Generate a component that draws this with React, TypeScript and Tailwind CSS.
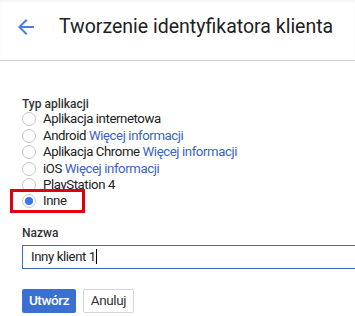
import React from 'react'

const options = [
  { label: 'Aplikacja internetowa', more: false },
  { label: 'Android', more: true },
  { label: 'Aplikacja Chrome', more: true },
  { label: 'iOS', more: true },
  { label: 'PlayStation 4', more: false },
]

const Radio = ({ checked }: { checked?: boolean }) => (
  <span className="w-[14px] h-[14px] rounded-full border border-[#c8c8c8] bg-white flex items-center justify-center shrink-0">
    {checked && <span className="w-[8px] h-[8px] rounded-full bg-[#3b78e7]" />}
  </span>
)

export default function App() {
  return (
    <div className="w-[355px] h-[316px] bg-white overflow-hidden text-[#212121]" style={{ fontFamily: 'Roboto, "Liberation Sans", sans-serif' }}>
      <div className="h-[61px] border-b border-[#d0d0d0] flex items-center shadow-[inset_0_2px_2px_rgba(0,0,0,0.04)]">
        <svg className="ml-[14px] mt-[-6px]" width="24" height="24" viewBox="0 0 24 24">
          <path d="M20 11H7.83l5.59-5.59L12 4l-8 8 8 8 1.41-1.41L7.83 13H20v-2z" fill="#4a7ee0" />
        </svg>
        <h1 className="ml-[21px] mt-[-6px] text-[19.5px] leading-none">Tworzenie identyfikatora klienta</h1>
      </div>

      <div className="pl-[22px] pt-[36px] tracking-[-0.4px]">
        <div className="text-[12px] font-medium leading-[14px] text-[#333] tracking-normal">Typ aplikacji</div>
        <div className="flex flex-col">
          {options.map((o) => (
            <label key={o.label} className="flex items-center gap-[7px] h-[16.5px] text-[13.2px]">
              <Radio />
              <span>
                {o.label}
                {o.more && <span className="text-[#3b5fc8]"> Więcej informacji</span>}
              </span>
            </label>
          ))}
          <div className="-ml-[12px] mt-[-5px] w-[75px] h-[24px] border-[3px] border-[#e0000f] flex items-center gap-[7px] pl-[9px]">
            <Radio checked />
            <span className="text-[13.2px]">Inne</span>
          </div>
        </div>

        <div className="mt-[11px] text-[12px] font-medium text-[#333] tracking-normal">Nazwa</div>
        <div className="mt-[3px] h-[24px] border-y-[1.5px] border-l-[1.5px] border-[#3b6db0] flex items-center pl-[8px] text-[13.2px]">
          Inny klient 1<span className="w-px h-[15px] bg-black" />
        </div>

        <div className="mt-[20px] flex gap-[7px]">
          <button className="w-[54px] h-[24px] rounded-[2px] bg-[#3b6fd0] text-white text-[13.5px] font-medium">Utwórz</button>
          <button className="w-[51px] h-[24px] rounded-[2px] border border-[#d5d5d5] bg-white text-[13.5px] text-[#333]">Anuluj</button>
        </div>
      </div>
    </div>
  )
}
